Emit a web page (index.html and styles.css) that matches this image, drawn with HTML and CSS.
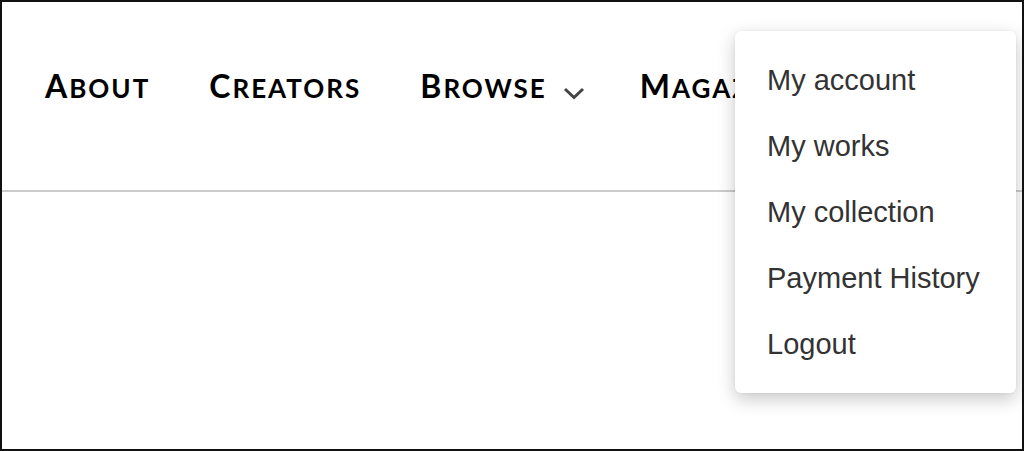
FILE: index.html
```html
<!DOCTYPE html>
<html lang="en">
<head>
  <meta charset="UTF-8">
  <meta name="viewport" content="width=device-width, initial-scale=1.0">
  <title>Account menu</title>
  <link rel="stylesheet" href="styles.css">
</head>
<body>
  <div class="frame">
    <header class="site-header">
      <nav class="main-nav">
        <a class="nav-link" href="#">About</a>
        <a class="nav-link" href="#">Creators</a>
        <a class="nav-link" href="#">Browse<svg class="chevron" width="22" height="13" viewBox="0 0 22 13"><path d="M2 2 L11 10.5 L20 2" fill="none" stroke="#444" stroke-width="3"/></svg></a>
        <a class="nav-link" href="#">Magazine</a>
      </nav>
    </header>

    <ul class="account-menu">
      <li><a href="#">My account</a></li>
      <li><a href="#">My works</a></li>
      <li><a href="#">My collection</a></li>
      <li><a href="#">Payment History</a></li>
      <li><a href="#">Logout</a></li>
    </ul>
  </div>
</body>
</html>
```

FILE: styles.css
```css
body { margin: 0; background: #fff; }
.frame { position: relative; box-sizing: border-box; height: 451px; border: 2px solid #111; overflow: hidden; }

.site-header { height: 188px; border-bottom: 2px solid #cbcbcb; }
.main-nav { display: flex; align-items: center; gap: 59px; height: 166px; padding-left: 43px; white-space: nowrap; }
.nav-link { display: inline-block; color: #000; text-decoration: none; font-family: Lato, "Liberation Sans", sans-serif; font-weight: 700; font-size: 26px; text-transform: uppercase; letter-spacing: 2px; }
.nav-link::first-letter { font-size: 32px; }
.chevron { margin-left: 16px; margin-right: -4px; vertical-align: -2px; }

.account-menu { position: absolute; left: 733px; top: 29px; width: 281px; margin: 0; padding: 16px 0; list-style: none; background: #fff; border-radius: 6px; box-shadow: 0 6px 18px rgba(0, 0, 0, 0.22), 0 0 3px rgba(0, 0, 0, 0.06); }
.account-menu a { display: block; padding: 0 32px; line-height: 66px; color: #333; text-decoration: none; font-family: "Liberation Sans", Arial, sans-serif; font-size: 29px; }
```
